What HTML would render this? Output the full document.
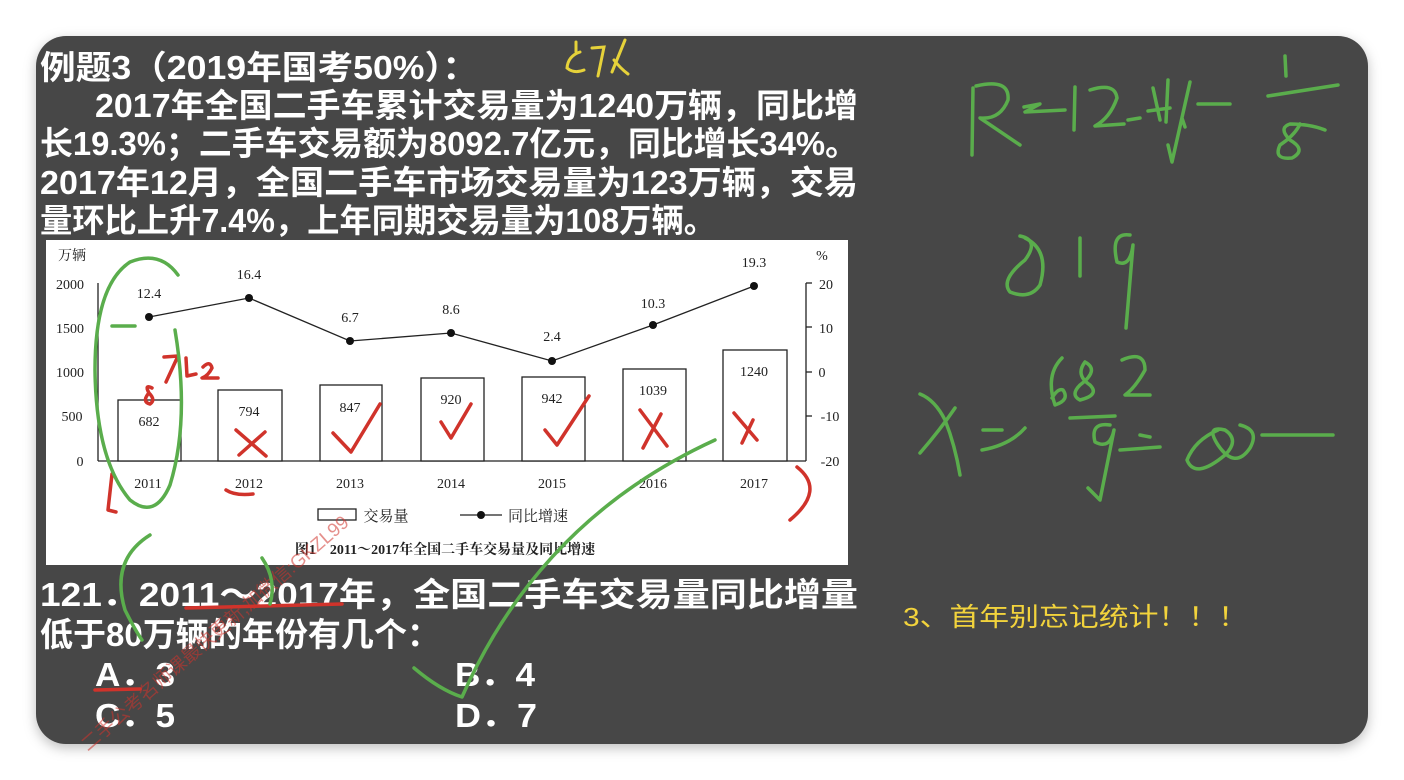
<!DOCTYPE html>
<html><head><meta charset="utf-8"><style>
html,body{margin:0;padding:0;background:#fff;width:1404px;height:780px;overflow:hidden}
svg{display:block}
</style></head><body>
<svg width="1404" height="780" viewBox="0 0 1404 780" xmlns="http://www.w3.org/2000/svg">
<defs><filter id="sh" x="-5%" y="-5%" width="110%" height="110%"><feDropShadow dx="0" dy="4" stdDeviation="6" flood-color="#000" flood-opacity="0.25"/></filter></defs>
<rect x="36" y="36" width="1332" height="708" rx="30" fill="#474747" filter="url(#sh)"/>
<g font-family="'Liberation Sans','Noto Sans CJK SC',sans-serif" font-weight="bold" fill="#fff" font-size="33">
<text x="40" y="79" textLength="438" lengthAdjust="spacingAndGlyphs">例题3（2019年国考50%）：</text>
<text x="95" y="117" textLength="763" lengthAdjust="spacingAndGlyphs">2017年全国二手车累计交易量为1240万辆，同比增</text>
<text x="40" y="155" textLength="818" lengthAdjust="spacingAndGlyphs">长19.3%；二手车交易额为8092.7亿元，同比增长34%。</text>
<text x="40" y="194" textLength="818" lengthAdjust="spacingAndGlyphs">2017年12月，全国二手车市场交易量为123万辆，交易</text>
<text x="40" y="232" textLength="676" lengthAdjust="spacingAndGlyphs">量环比上升7.4%，上年同期交易量为108万辆。</text>
<text x="40" y="606" textLength="818" lengthAdjust="spacingAndGlyphs">121．2011～2017年，全国二手车交易量同比增量</text>
<text x="40" y="646" textLength="400" lengthAdjust="spacingAndGlyphs">低于80万辆的年份有几个：</text>
<text x="95" y="686" textLength="80" lengthAdjust="spacingAndGlyphs">A．3</text>
<text x="455" y="686" textLength="80" lengthAdjust="spacingAndGlyphs">B．4</text>
<text x="95" y="727" textLength="80" lengthAdjust="spacingAndGlyphs">C．5</text>
<text x="455" y="727" textLength="82" lengthAdjust="spacingAndGlyphs">D．7</text>
</g>
<text x="903" y="626" font-family="'Liberation Sans','Noto Sans CJK SC',sans-serif" font-size="26" fill="#f2d33c" textLength="345" lengthAdjust="spacingAndGlyphs">3、首年别忘记统计！！！</text>

<!-- chart -->
<rect x="46" y="240" width="802" height="325" fill="#fff"/>
<g stroke="#222" stroke-width="1.3" fill="#fff">
<line x1="98" y1="283" x2="98" y2="461"/>
<line x1="806" y1="283" x2="806" y2="461"/>
<line x1="98" y1="461" x2="806" y2="461"/>
<rect x="118" y="400" width="63" height="61"/>
<rect x="218" y="390" width="64" height="71"/>
<rect x="320" y="385" width="62" height="76"/>
<rect x="421" y="378" width="63" height="83"/>
<rect x="522" y="377" width="63" height="84"/>
<rect x="623" y="369" width="63" height="92"/>
<rect x="723" y="350" width="64" height="111"/>
<polyline fill="none" points="149,317 249,298 350,341 451,333 552,361 653,325 754,286"/>
<line x1="806" y1="283" x2="812" y2="283"/><line x1="806" y1="327" x2="812" y2="327"/><line x1="806" y1="372" x2="812" y2="372"/><line x1="806" y1="416" x2="812" y2="416"/>
<rect x="318" y="509" width="38" height="11"/>
<line x1="460" y1="515" x2="502" y2="515"/>
</g>
<g fill="#111"><circle cx="149" cy="317" r="4"/><circle cx="249" cy="298" r="4"/><circle cx="350" cy="341" r="4"/><circle cx="451" cy="333" r="4"/><circle cx="552" cy="361" r="4"/><circle cx="653" cy="325" r="4"/><circle cx="754" cy="286" r="4"/><circle cx="481" cy="515" r="4"/></g>
<g font-family="'Liberation Serif','Noto Serif CJK SC',serif" font-size="14" fill="#222" text-anchor="middle">
<text x="72" y="260">万辆</text><text x="822" y="260">%</text>
<text x="70" y="289">2000</text><text x="70" y="333">1500</text><text x="70" y="377">1000</text><text x="72" y="421">500</text><text x="80" y="466">0</text>
<text x="826" y="289">20</text><text x="826" y="333">10</text><text x="822" y="377">0</text><text x="830" y="421">-10</text><text x="830" y="466">-20</text>
<text x="149" y="298">12.4</text><text x="249" y="279">16.4</text><text x="350" y="322">6.7</text><text x="451" y="314">8.6</text><text x="552" y="341">2.4</text><text x="653" y="308">10.3</text><text x="754" y="267">19.3</text>
<text x="149" y="426">682</text><text x="249" y="416">794</text><text x="350" y="412">847</text><text x="451" y="404">920</text><text x="552" y="403">942</text><text x="653" y="395">1039</text><text x="754" y="376">1240</text>
<text x="148" y="488">2011</text><text x="249" y="488">2012</text><text x="350" y="488">2013</text><text x="451" y="488">2014</text><text x="552" y="488">2015</text><text x="653" y="488">2016</text><text x="754" y="488">2017</text>
<text x="386" y="521" font-size="15">交易量</text><text x="538" y="521" font-size="15">同比增速</text>
<text x="445" y="554" font-size="14" font-weight="bold">图1　2011～2017年全国二手车交易量及同比增速</text>
</g>

<!-- red annotations -->
<g fill="none" stroke="#d0332b" stroke-width="3.5" stroke-linecap="round" stroke-linejoin="round">
<path d="M164 357 L178 356 L166 382 M186 358 L187 376 L196 374 M203 367 Q210 360 212 368 Q208 376 202 378 L218 378"/>
<path d="M152 388 Q144 384 149 393 Q156 400 150 404 Q142 402 148 394"/>
<path d="M236 430 L266 456 M265 432 L239 455"/>
<path d="M333 433 L351 452 L380 404"/>
<path d="M441 422 L451 438 L471 404"/>
<path d="M545 430 L557 445 L589 396"/>
<path d="M640 410 L667 446 M661 414 L643 448"/>
<path d="M734 413 L757 440 M753 420 L742 443"/>
<path d="M112 474 L108 510 L116 512"/>
<path d="M797 467 Q826 490 790 520"/>
<path d="M226 490 Q235 496 253 494"/>
<path d="M186 608 Q270 606 342 604"/>
<path d="M95 690 L140 689"/>
</g>
<g font-family="'Liberation Sans','Noto Sans CJK SC',sans-serif" font-size="19" fill="#d0332b" fill-opacity="0.55">
<text x="0" y="0" transform="translate(88,752) rotate(-41)">二手公考名师课最快更新,加微信:GKZL99</text>
</g>

<!-- green annotations -->
<g fill="none" stroke="#5aad4c" stroke-width="3.5" stroke-linecap="round" stroke-linejoin="round">
<path d="M178 275 Q160 250 130 262 Q95 285 95 370 Q96 460 130 500 Q155 520 170 485 Q190 420 175 330"/>
<path d="M112 326 L135 326"/>
<path d="M150 535 Q110 560 125 610 Q135 630 142 640"/>
<path d="M270 604 Q277 580 262 558"/>
<path d="M414 668 Q440 690 462 697 Q540 520 715 440"/>
<!-- R=12.4%=1/8 -->
<path d="M973 88 L972 155 M976 86 Q1010 78 1008 100 Q1000 120 980 118 L1020 145"/>
<path d="M1024 107 L1040 104 L1025 112 L1065 110"/>
<path d="M1075 87 L1074 130 M1090 90 Q1115 82 1117 98 Q1110 118 1095 126 L1124 124"/>
<path d="M1128 120 L1140 118"/>
<path d="M1153 88 L1160 120 M1168 80 L1166 122 M1148 111 L1170 108"/>
<path d="M1190 82 L1172 162 L1168 145 M1182 118 L1185 127"/>
<path d="M1198 104 L1230 104 M1285 56 L1286 76 M1268 96 L1338 85"/>
<path d="M1300 124 Q1295 135 1280 145 Q1273 160 1292 158 Q1307 150 1290 140 Q1278 128 1290 124 Q1310 124 1325 130"/>
<!-- 819 -->
<path d="M1025 238 Q1050 250 1040 285 Q1030 300 1010 292 Q1000 280 1025 260 Q1040 240 1020 236"/>
<path d="M1080 238 L1080 276"/>
<path d="M1130 235 Q1110 232 1117 262 Q1130 268 1133 245 L1126 328"/>
<!-- x = 682/9 = 80 -->
<path d="M920 394 Q935 400 945 420 Q955 445 960 475 M920 453 Q940 430 955 408"/>
<path d="M983 430 L1002 430 M982 450 Q1010 445 1025 428"/>
<path d="M1062 358 Q1045 375 1055 405 Q1070 400 1063 390 Q1058 388 1052 398"/>
<path d="M1085 362 Q1100 370 1080 385 Q1070 395 1080 400 Q1100 395 1090 385 Q1075 375 1085 362"/>
<path d="M1122 360 Q1145 350 1145 370 Q1135 388 1125 395 L1150 395"/>
<path d="M1070 418 L1115 416"/>
<path d="M1110 425 Q1090 422 1095 442 Q1110 450 1114 430 L1100 500 L1088 488"/>
<path d="M1120 450 L1160 447 M1140 435 L1150 437"/>
<path d="M1218 430 Q1195 440 1187 460 Q1195 480 1225 455 Q1240 440 1225 430 Q1205 425 1218 445 Q1235 470 1250 448 Q1260 430 1240 425"/>
<path d="M1262 435 L1333 435"/>
</g>
<path d="M576 42 L576 52 M580 52 Q568 56 567 68 Q574 74 584 70 M592 48 L604 47 L598 76 M625 40 L612 72 M614 60 Q620 68 628 74" fill="none" stroke="#e6d23a" stroke-width="3" stroke-linecap="round"/>
</svg>
</body></html>
